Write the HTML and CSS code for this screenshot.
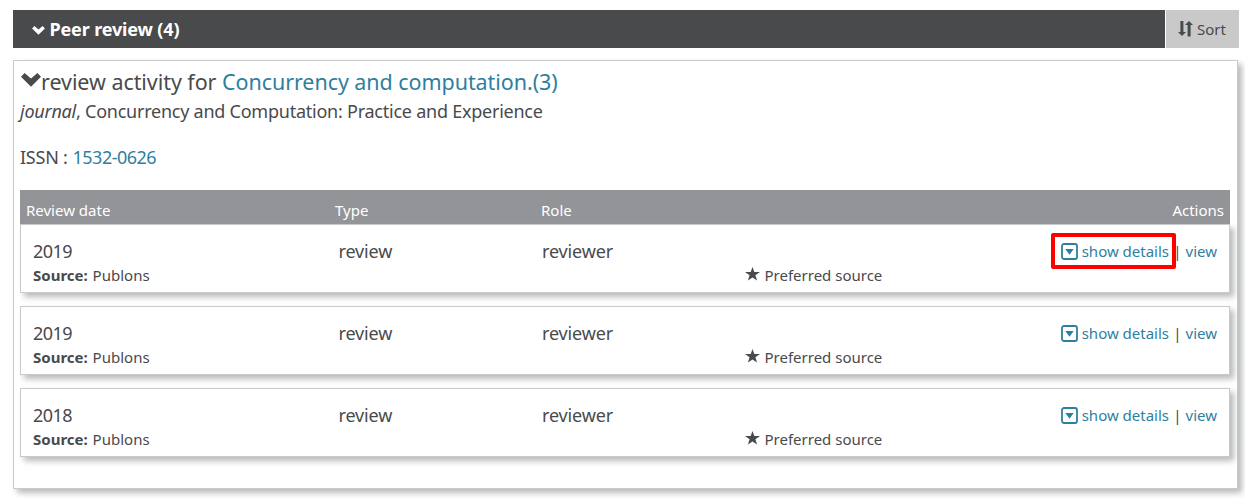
FILE: index.html
```html
<!DOCTYPE html>
<html lang="en">
<head>
<meta charset="utf-8">
<title>Peer review</title>
<link rel="stylesheet" href="styles.css">
</head>
<body>
<svg class="symbols" width="0" height="0" aria-hidden="true">
  <symbol id="chevron" viewBox="0 0 20 14"><path d="M3.6 0 10 5.4 16.4 0 20 3.8 10 13.8 0 3.8Z" fill="currentColor"/></symbol>
  <symbol id="star" viewBox="0 0 15 14"><path d="M7.5 0 9.3 5H15l-4.6 3.3L12.1 13.6 7.5 10.4 2.9 13.6 4.6 8.3 0 5h5.7Z" fill="currentColor"/></symbol>
  <symbol id="toggle" viewBox="0 0 17 17"><rect x="1" y="1" width="15" height="15" rx="2" fill="none" stroke="currentColor" stroke-width="1.8"/><path d="M4.3 6h8.4L8.5 11.7Z" fill="currentColor"/></symbol>
</svg>
<header class="bar">
  <h1 class="bar-title"><svg class="bar-chevron"><use href="#chevron"/></svg><span class="bar-text">Peer review (4)</span></h1>
  <button class="sort"><svg class="sort-icon" viewBox="0 0 15 16"><path d="M2.4 0H5.4V11H8L4 15 0 11H2.4ZM9.6 15.5V4H7L11 0 15 4H12.6V15.5Z" fill="currentColor"/></svg><span class="sort-text">Sort</span></button>
</header>
<main class="panel">
  <h2 class="title"><svg class="title-chevron"><use href="#chevron"/></svg><span class="title-text">review activity for <a>Concurrency and computation.(3)</a></span></h2>
  <p class="journal"><i>journal</i>, <span class="journal-name">Concurrency and Computation: Practice and Experience</span></p>
  <p class="issn">ISSN : <a class="number">1532-0626</a></p>
  <div class="head"><span>Review date</span><span>Type</span><span>Role</span><span class="head-actions">Actions</span></div>
  <section class="row">
    <div class="line"><span class="number">2019</span><span>review</span><span>reviewer</span><span class="actions"><a class="details marked"><svg class="toggle"><use href="#toggle"/></svg>show details</a><span class="sep">|</span><a>view</a></span></div>
    <div class="source"><span><b>Source:</b> Publons</span><span class="preferred"><svg class="star"><use href="#star"/></svg>Preferred source</span></div>
  </section>
  <section class="row">
    <div class="line"><span class="number">2019</span><span>review</span><span>reviewer</span><span class="actions"><a class="details"><svg class="toggle"><use href="#toggle"/></svg>show details</a><span class="sep">|</span><a>view</a></span></div>
    <div class="source"><span><b>Source:</b> Publons</span><span class="preferred"><svg class="star"><use href="#star"/></svg>Preferred source</span></div>
  </section>
  <section class="row">
    <div class="line"><span class="number">2018</span><span>review</span><span>reviewer</span><span class="actions"><a class="details"><svg class="toggle"><use href="#toggle"/></svg>show details</a><span class="sep">|</span><a>view</a></span></div>
    <div class="source"><span><b>Source:</b> Publons</span><span class="preferred"><svg class="star"><use href="#star"/></svg>Preferred source</span></div>
  </section>
</main>
</body>
</html>
```
FILE: styles.css
```css
*, *::after { box-sizing: border-box; }
body { margin: 0; padding: 10px 7px 0 13px; height: 498px; overflow: hidden; background: #fff; color: #494a4c; font-family: "Noto Sans", sans-serif; font-size: 18px; letter-spacing: -0.24px; }
.symbols { display: block; }
h1, h2, p { margin: 0; font-weight: 400; }
a { color: #2e7f9f; }
.number { letter-spacing: -0.52px; }
.bar { display: flex; gap: 1px; height: 38px; width: 1226px; margin-right: -1px; }
.bar-title { flex: 1; display: flex; align-items: center; padding: 0 0 0 19px; background: #494a4c; color: #fff; font-size: 18px; font-weight: 700; letter-spacing: -0.15px; }
.bar-chevron { width: 13px; height: 9px; margin: 3px 4.5px 0 0; }
.sort { display: flex; align-items: center; width: 73px; padding: 0 0 0 12px; border: 0; background: #c9c9c9; color: #494a4c; font: 15px "Noto Sans", sans-serif; }
.sort-icon { width: 15px; height: 16px; margin: 0 4px 1px 0; }
.panel { width: 1225px; height: 429px; margin-top: 12px; padding: 5px 7px 0 6px; border: 1px solid #c9cacc; box-shadow: 4px 4px 6px #b9babb; }
.title { display: flex; height: 32px; font-size: 21.5px; line-height: 31px; letter-spacing: -0.06px; white-space: nowrap; }
.title-chevron { width: 20px; height: 14px; margin: 7px 0 0 1px; }
.journal { height: 28px; line-height: 26px; }
.issn { height: 64px; line-height: 62px; }
.issn .number { margin-left: 0.5px; }
.head, .line { display: grid; grid-template-columns: 309px 206px 1fr auto; }
.head { height: 34px; padding: 3px 6px 0; background: #939498; color: #fff; font-size: 15px; line-height: 35px; letter-spacing: 0; }
.row { height: 69px; margin-bottom: 13px; padding: 13px 12px 0; border: 1px solid #c9cacc; box-shadow: 4px 4px 6px #b9babb; }
.line { grid-template-columns: 305.5px 203.5px 1fr auto; height: 26px; line-height: 27px; }
.line > span:not(.number):not(.actions) { letter-spacing: -0.15px; }
.actions { display: flex; font-size: 15px; line-height: 26px; letter-spacing: 0; }
.details { display: flex; position: relative; }
.marked::after { content: ""; position: absolute; left: -10px; top: -5px; width: 125px; height: 36px; border: 4px solid #f00; border-radius: 2px; }
.toggle { width: 17px; height: 17px; margin: 5px 3.5px 0 0; }
.sep { width: 16.5px; text-align: center; color: #494a4c; }
.source { display: grid; grid-template-columns: 712px 1fr; font-size: 15px; line-height: 22px; letter-spacing: 0; }
.source b { margin-right: 1px; }
.preferred { display: flex; }
.star { width: 15px; height: 14px; margin: 3px 4.5px 0 0; }
```
